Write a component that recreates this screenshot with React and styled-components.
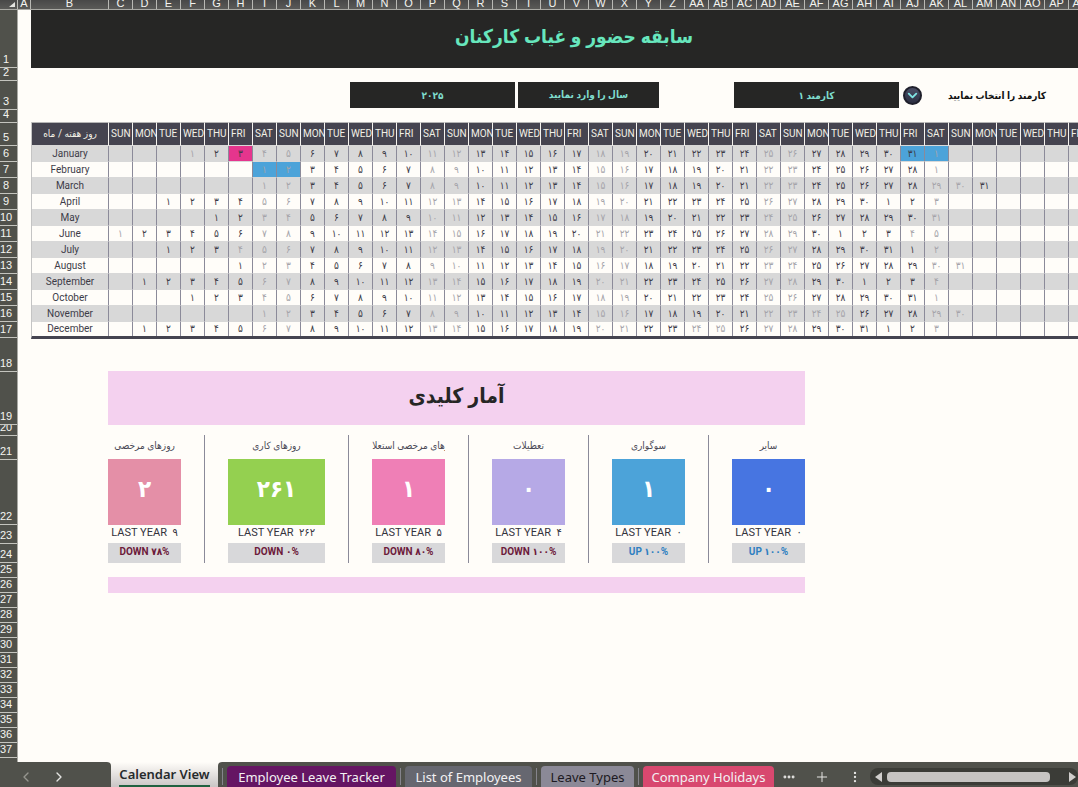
import React, { useState } from "react";
import styled, { createGlobalStyle } from "styled-components";
import { ChevronLeft, ChevronRight, ChevronDown, Plus, Ellipsis, EllipsisVertical } from "lucide-react";

const GlobalStyle = createGlobalStyle`
  body {
    margin: 0;
    background: #fffdf9;
    font-family: Roboto, "DejaVu Sans Condensed", "DejaVu Sans", sans-serif;
    overflow: hidden;
  }

  button, input, select {
    font-family: inherit;
    border: 0;
    border-radius: 0;
    margin: 0;
    padding: 0;
  }
`;

// Page layout
const Page = styled.div`
  display: flex;
  flex-direction: column;
  height: 100vh;
`;

const Workspace = styled.div`
  flex: 1;
  min-height: 0;
  overflow: hidden;
`;

const Body = styled.div`
  display: flex;
`;

// Column letters above the sheet
const ColumnStrip = styled.div`
  display: flex;
  height: 9px;
  overflow: hidden;
  background: linear-gradient(#484848, #5a5a58);
  border-bottom: 1px solid #a9a9a4;
`;

const ColumnName = styled.div`
  box-sizing: border-box;
  flex: none;
  display: flex;
  justify-content: center;
  align-items: flex-end;
  width: ${props => props.$width}px;
  border-right: 1px solid #b9b9b4;
  color: #f4f4f0;
  font: 11px/11px "Liberation Sans", sans-serif;
`;

const Corner = styled.svg`
  flex: none;
  width: 18px;
  height: 9px;
`;

// Row numbers beside the sheet
const Gutter = styled.div`
  box-sizing: border-box;
  flex: none;
  width: 18px;
  background: #50514b;
  border-right: 1px solid #a9a9a4;
`;

const RowNumber = styled.div`
  box-sizing: border-box;
  display: flex;
  justify-content: center;
  align-items: flex-end;
  height: ${props => props.$height}px;
  padding-right: 5px;
  overflow: hidden;
  border-bottom: 1px solid #c4c4be;
  color: #f4f4f0;
  font: 11px/15px "Liberation Sans", sans-serif;
`;

const Sheet = styled.main`
  flex: none;
  width: max-content;
  padding-left: 13px;
`;

const Banner = styled.header`
  display: flex;
  justify-content: center;
  height: 58px;
  background: #262625;
`;

const Title = styled.h1`
  margin: 0;
  color: #67e6bd;
  font-size: 19px;
  line-height: 54px;
`;

const Filters = styled.div`
  display: flex;
  align-items: center;
  height: 26px;
  padding: 14px 0 14px 319px;
  font-size: 10px;
  font-weight: bold;
`;

const YearInput = styled.input`
  width: 165px;
  height: 26px;
  background: #262625;
  color: #7fdccd;
  font-size: 10px;
  font-weight: bold;
  text-align: center;
`;

const YearLabel = styled.label`
  width: 141px;
  margin: 0 75px 0 3px;
  background: #262625;
  color: #7fdccd;
  line-height: 26px;
  text-align: center;
`;

const EmployeeSelect = styled.select`
  appearance: none;
  width: 165px;
  height: 26px;
  background: #262625;
  color: #7fdccd;
  font-size: 10px;
  font-weight: bold;
  text-align: center;
  text-align-last: center;
`;

const RoundButton = styled.button`
  box-sizing: border-box;
  display: flex;
  align-items: center;
  justify-content: center;
  width: 19px;
  height: 19px;
  margin: 0 26px 0 4px;
  border: 2px solid #1f1f2b;
  border-radius: 50%;
  background: linear-gradient(#4b4e66, #2c2f42);
  color: #7fe3e3;
`;

const EmployeeLabel = styled.label`
  color: #111;
`;

// Calendar
const Calendar = styled.table`
  table-layout: fixed;
  width: 1086px;
  border-spacing: 0;
  border-left: 1px solid #c4c4c4;
  border-bottom: 3px solid #454450;
  font-size: 10px;
  color: #3d3c48;
`;

const HeadCell = styled.th`
  box-sizing: border-box;
  height: 24px;
  padding: 0 0 0 ${props => (props.$month ? 0 : 2)}px;
  overflow: hidden;
  white-space: nowrap;
  text-align: ${props => (props.$month ? "center" : "left")};
  font-weight: normal;
  line-height: 20px;
  background: #454450;
  color: #f2f0e6;
  border-top: 1px solid #b5b5b5;
  border-right: 1px solid #f4f2ee;
  border-bottom: 1px solid #d8d8d8;
`;

const MonthRow = styled.tr`
  background: ${props => (props.$shaded ? "#d8d8d8" : "#fffdf9")};

  td, th {
    padding: 0;
    font-weight: normal;
    text-align: center;
    line-height: 15px;
    border-right: 1px solid #8b8a99;
    border-bottom: 1px solid #d8d8d8;
  }

  &:last-child td, &:last-child th {
    line-height: 14px;
    border-bottom: 0;
  }
`;

const DayCell = styled.td`
  color: ${props => (props.$dim ? "#a5a4aa" : "#3d3c48")};
  background: ${props => props.$mark || "transparent"};
`;

// Key stats
const Stats = styled.section`
  width: 697px;
  margin: 32px 0 0 77px;
`;

const StatsTitle = styled.h2`
  height: 54px;
  margin: 0 0 10px;
  background: #f4d1ef;
  color: #262625;
  font-size: 21px;
  line-height: 50px;
  text-align: center;
`;

const Cards = styled.div`
  display: flex;
`;

const Card = styled.div`
  flex: ${props => (props.$wide ? 97 : 73)} 0 0;
  min-width: 0;
  text-align: center;
`;

const Divider = styled.div`
  width: 1px;
  margin: 0 23px;
  background: #8b8a99;
`;

const CardLabel = styled.div`
  display: flex;
  justify-content: center;
  height: 24px;
  overflow: hidden;
  white-space: nowrap;
  color: #4a4955;
  font-size: 10px;
  line-height: 22px;
`;

const CardValue = styled.div`
  height: 66px;
  background: ${props => props.$color};
  color: #fff;
  font-size: 24px;
  font-weight: bold;
  line-height: 60px;
`;

const LastYear = styled.div`
  height: 18px;
  color: #33323c;
  font-size: 11px;
  line-height: 16px;
  white-space: pre;
`;

const Change = styled.div`
  height: 20px;
  background: #d8d8da;
  color: ${props => (props.$up ? "#2f7fc1" : "#6d1b3b")};
  font-size: 10px;
  font-weight: bold;
  line-height: 18px;
`;

const ClosingBar = styled.div`
  height: 16px;
  margin-top: 14px;
  background: #f4d1ef;
`;

// Sheet tabs
const TabBar = styled.nav`
  flex: none;
  display: flex;
  height: 25px;
  overflow: hidden;
  font-family: "Noto Sans", "Open Sans", sans-serif;
`;

const Arrows = styled.div`
  box-sizing: border-box;
  display: flex;
  align-items: center;
  gap: 17px;
  width: 111px;
  padding: 4px 0 0 18px;
  background: #50514b;
  border-top-right-radius: 4px;
`;

const IconButton = styled.button`
  display: flex;
  background: none;
  color: ${props => (props.$muted ? "#96958f" : "#e4e4e2")};
`;

const ActiveTab = styled.button`
  width: 107px;
  padding: 0 8px;
  background: linear-gradient(#fffdf9, #c9c5c5);
  color: #262a2c;
  font-size: 13px;
  font-weight: 600;

  span {
    display: block;
    white-space: nowrap;
    line-height: 22px;
    border-bottom: 2px solid #1f6140;
  }
`;

const TabArea = styled.div`
  flex: 1;
  min-width: 0;
  display: flex;
  align-items: center;
  padding: 4px 0 0 4px;
  background: #50514b;
  border-top-left-radius: 4px;
`;

const Tab = styled.button`
  flex: none;
  height: 21px;
  width: ${props => props.$width}px;
  margin-right: 4px;
  background: ${props => props.$color};
  color: ${props => props.$text || "#f3f1f3"};
  border-radius: 4px 4px 0 0;
  font-size: 13px;
  line-height: 22px;
  white-space: nowrap;
`;

const TabSeparator = styled.div`
  flex: none;
  width: 1px;
  height: 17px;
  margin-right: 4px;
  background: #85848c;
`;

const TabTools = styled.div`
  flex: none;
  display: flex;
  align-items: center;
  gap: 18px;
  width: 86px;
  margin: 0 2px 0 4px;
`;

const ScrollTrack = styled.div`
  flex: 1;
  display: flex;
  align-items: center;
  gap: 5px;
  height: 17px;
  padding: 0 2px 0 5px;
  background: #3b3c37;
  border-radius: 8px;
`;

const ScrollThumb = styled.div`
  flex: 1;
  height: 10px;
  margin-right: 14px;
  background: #c6c4c2;
  border-radius: 4px;
`;

const Triangle = styled.svg`
  flex: none;
  width: 7px;
  height: 10px;
  fill: #d0cecc;
`;

const DAYS = ["SUN", "MON", "TUE", "WED", "THU", "FRI", "SAT"];
const COLUMN_COUNT = 42;
const ROW_HEIGHTS = [58, 13, 29, 13, 23, ...Array(12).fill(16), 34, 53, 11, 24, 65, 19, 19, ...Array(13).fill(15)];

const PINK = "#e5358d";
const BLUE = "#4ca3d9";

// start: column of the first day, off: dimmed weekdays, marks: booked leave by column
const MONTHS = [
  { name: "January", start: 3, days: 31, off: [3], marks: { 5: PINK, 33: BLUE, 34: BLUE } },
  { name: "February", start: 6, days: 28, marks: { 6: BLUE, 7: BLUE } },
  { name: "March", start: 6, days: 31 },
  { name: "April", start: 2, days: 30 },
  { name: "May", start: 4, days: 31 },
  { name: "June", start: 0, days: 30, off: [33] },
  { name: "July", start: 2, days: 31, off: [5] },
  { name: "August", start: 5, days: 31 },
  { name: "September", start: 1, days: 30 },
  { name: "October", start: 3, days: 31 },
  { name: "November", start: 6, days: 30, off: [29, 30] },
  { name: "December", start: 1, days: 31, off: [24, 25] },
];

const STATS = [
  { label: "روزهای مرخصی", value: 2, last: 9, change: 78, color: "#e48fa7" },
  { label: "روزهای کاری", value: 261, last: 262, change: 0, color: "#94d050", wide: true },
  { label: "روزهای مرخصی استعلاجی", value: 1, last: 5, change: 80, color: "#ef7fb6" },
  { label: "تعطیلات", value: 0, last: 4, change: 100, color: "#b6a9e6" },
  { label: "سوگواری", value: 1, last: 0, change: 100, color: "#4ca3d9", up: true },
  { label: "سایر", value: 0, last: 0, change: 100, color: "#4775e1", up: true },
];

const TABS = [
  { name: "Employee Leave Tracker", color: "#651563", width: 169 },
  { name: "List of Employees", color: "#666770", width: 127 },
  { name: "Leave Types", color: "#8b8997", text: "#1d1a22", width: 93 },
  { name: "Company Holidays", color: "#d8486f", width: 131 },
];

const persian = (number) => String(number).replace(/\d/g, d => "۰۱۲۳۴۵۶۷۸۹"[d]);

const columnName = (index) => {
  const letter = String.fromCharCode(65 + (index % 26));
  return index < 26 ? letter : `A${letter}`;
};

// Short months are followed by the first days of the next one
const dayAt = (month, column) => {
  const day = column - month.start + 1;
  if (day < 1) return null;
  if (day <= month.days) return day;
  return column < 35 ? day - month.days : null;
};

const columns = [...Array(COLUMN_COUNT).keys()];

const App = () => {
  const [year, setYear] = useState("۲۰۲۵");

  return (
    <Page>
      <GlobalStyle />
      <Workspace>
        <ColumnStrip>
          <Corner viewBox="0 0 18 9">
            <path d="M15 2v5h-6z" fill="#e4e4e0" />
            <path d="M17.5 0v9" stroke="#b9b9b4" />
          </Corner>
          <ColumnName $width={13}>A</ColumnName>
          <ColumnName $width={78}>B</ColumnName>
          {columns.map(column => (
            <ColumnName key={column} $width={24}>{columnName(column + 2)}</ColumnName>
          ))}
        </ColumnStrip>
        <Body>
          <Gutter>
            {ROW_HEIGHTS.map((height, index) => (
              <RowNumber key={index} $height={height}>{index + 1}</RowNumber>
            ))}
            <RowNumber $height={15} />
          </Gutter>
          <Sheet>
            <Banner>
              <Title dir="rtl">سابقه حضور و غیاب کارکنان</Title>
            </Banner>
            <Filters>
              <YearInput id="year" value={year} onChange={e => setYear(e.target.value)} />
              <YearLabel htmlFor="year" dir="rtl">سال را وارد نمایید</YearLabel>
              <EmployeeSelect id="employee" dir="rtl">
                <option>کارمند ۱</option>
              </EmployeeSelect>
              <RoundButton aria-label="Open the list of employees">
                <ChevronDown size={15} strokeWidth={3} />
              </RoundButton>
              <EmployeeLabel htmlFor="employee" dir="rtl">کارمند را انتخاب نمایید</EmployeeLabel>
            </Filters>
            <Calendar>
              <colgroup>
                <col width="77" />
                {columns.map(column => <col key={column} width="24" />)}
              </colgroup>
              <thead>
                <tr>
                  <HeadCell $month dir="rtl">روز هفته / ماه</HeadCell>
                  {columns.map(column => (
                    <HeadCell key={column}>{DAYS[column % 7]}</HeadCell>
                  ))}
                </tr>
              </thead>
              <tbody>
                {MONTHS.map((month, index) => (
                  <MonthRow key={month.name} $shaded={index % 2 === 0}>
                    <th>{month.name}</th>
                    {columns.map(column => {
                      const day = dayAt(month, column);
                      const dim = [0, 6].includes(column % 7) || month.off?.includes(column);
                      return (
                        <DayCell key={column} $dim={dim} $mark={month.marks?.[column]}>
                          {day && persian(day)}
                        </DayCell>
                      );
                    })}
                  </MonthRow>
                ))}
              </tbody>
            </Calendar>
            <Stats>
              <StatsTitle dir="rtl">آمار کلیدی</StatsTitle>
              <Cards>
                {STATS.map((stat, index) => (
                  <React.Fragment key={stat.label}>
                    {index > 0 && <Divider />}
                    <Card $wide={stat.wide}>
                      <CardLabel><span dir="rtl">{stat.label}</span></CardLabel>
                      <CardValue $color={stat.color}>{persian(stat.value)}</CardValue>
                      <LastYear>{`LAST YEAR  ${persian(stat.last)}`}</LastYear>
                      <Change $up={stat.up}>{`${stat.up ? "UP" : "DOWN"} ${persian(stat.change)}%`}</Change>
                    </Card>
                  </React.Fragment>
                ))}
              </Cards>
              <ClosingBar />
            </Stats>
          </Sheet>
        </Body>
      </Workspace>
      <TabBar>
        <Arrows>
          <IconButton $muted aria-label="Previous sheet"><ChevronLeft size={16} strokeWidth={2} /></IconButton>
          <IconButton aria-label="Next sheet"><ChevronRight size={16} strokeWidth={2} /></IconButton>
        </Arrows>
        <ActiveTab><span>Calendar View</span></ActiveTab>
        <TabArea>
          {TABS.map(tab => (
            <React.Fragment key={tab.name}>
              <TabSeparator />
              <Tab $color={tab.color} $text={tab.text} $width={tab.width}>{tab.name}</Tab>
            </React.Fragment>
          ))}
          <TabTools>
            <IconButton aria-label="More sheets"><Ellipsis size={14} strokeWidth={3} /></IconButton>
            <IconButton aria-label="New sheet"><Plus size={16} strokeWidth={1.5} /></IconButton>
            <IconButton aria-label="Options"><EllipsisVertical size={14} strokeWidth={2} /></IconButton>
          </TabTools>
          <ScrollTrack>
            <Triangle viewBox="0 0 7 10"><path d="M7 0v10L0 5z" /></Triangle>
            <ScrollThumb />
            <Triangle viewBox="0 0 7 10"><path d="M0 0v10l7-5z" /></Triangle>
          </ScrollTrack>
        </TabArea>
      </TabBar>
    </Page>
  );
};

export default App;
